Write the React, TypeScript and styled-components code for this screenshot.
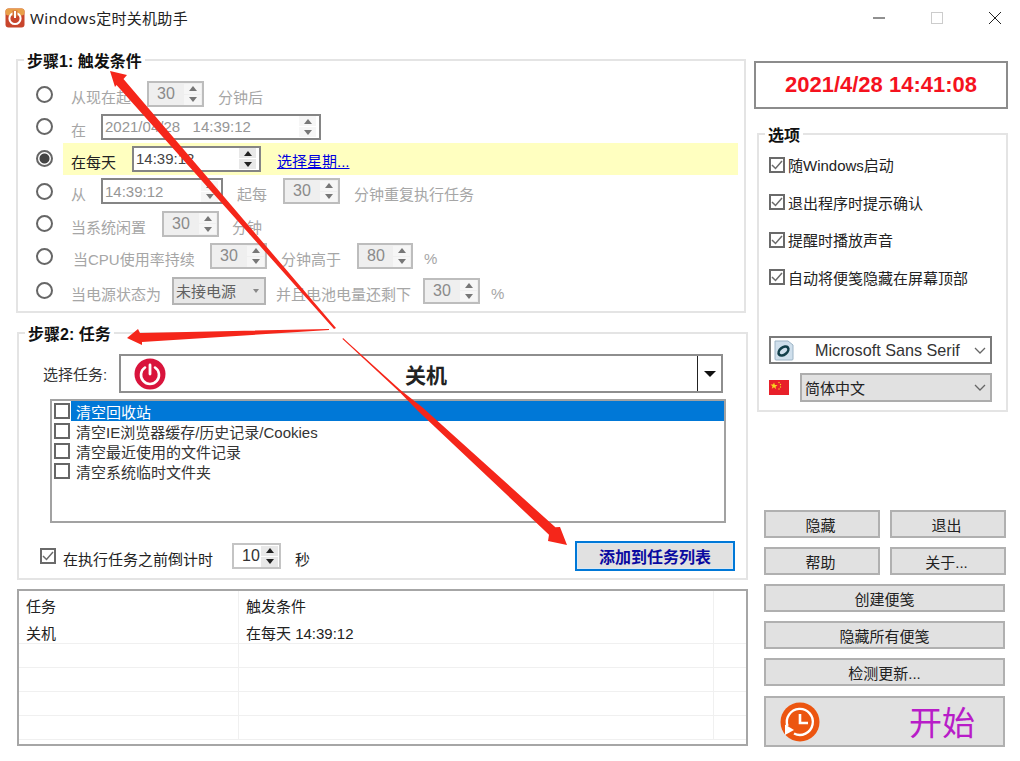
import React from "react";
import styled, { createGlobalStyle } from "styled-components";

const GlobalStyle = createGlobalStyle`
  html, body {
    margin: 0;
    padding: 0;
    background: #fff;
  }
  * {
    box-sizing: border-box;
  }
`;

const FONT = `"Liberation Sans", "Noto Sans CJK SC", sans-serif`;

const Spinner = ({ value, width, disabled }: { value: string; width: number; disabled?: boolean }) => (
  <SpinBox $w={width} $disabled={disabled}>
    <SpinValue>{value}</SpinValue>
    <SpinButtons>
      <SpinArrow $disabled={disabled} />
      <SpinArrow $down $disabled={disabled} />
    </SpinButtons>
  </SpinBox>
);

const AppIcon = () => (
  <svg width="20" height="20" viewBox="0 0 20 20">
    <rect x="0.5" y="0.5" width="19" height="19" rx="3" fill="#c8452c" />
    <rect x="0.5" y="0.5" width="19" height="7" rx="3" fill="#e8a04a" />
    <circle cx="10" cy="10.5" r="5.6" fill="none" stroke="#fff" strokeWidth="2" />
    <rect x="7.5" y="2.5" width="5" height="6" fill="#d4703a" />
    <rect x="9" y="3" width="2" height="7" fill="#fff" />
  </svg>
);

const PowerIcon = () => (
  <svg width="32" height="32" viewBox="0 0 32 32">
    <circle cx="16" cy="16" r="15.5" fill="#d9143c" />
    <path d="M11 9.5a9 9 0 1 0 10 0" fill="none" stroke="#fff" strokeWidth="2.6" strokeLinecap="round" />
    <path d="M16 7v9" stroke="#fff" strokeWidth="2.8" strokeLinecap="round" />
  </svg>
);

const FontIcon = () => (
  <svg width="20" height="22" viewBox="0 0 20 22">
    <path d="M1 2h13l5 4v14a1 1 0 0 1-1 1H2a1 1 0 0 1-1-1z" fill="#cfdfec" stroke="#9db4c6" />
    <ellipse cx="9.5" cy="12" rx="5.6" ry="3.6" fill="none" stroke="#123f4a" strokeWidth="2.6" transform="rotate(-40 9.5 12)" />
  </svg>
);

const FlagIcon = () => (
  <svg width="20" height="15" viewBox="0 0 20 15">
    <rect width="20" height="15" fill="#e8202a" />
    <path d="M5 2.5l.9 2.5 2.6.1-2 1.6.7 2.5L5 7.3 2.800 8.700l.7-2.500-2-1.600 2.600-.1z" fill="#f8d820" />
    <circle cx="10" cy="2.500" r=".7" fill="#f8d820" />
    <circle cx="11.500" cy="4.500" r=".7" fill="#f8d820" />
    <circle cx="11.500" cy="7" r=".7" fill="#f8d820" />
    <circle cx="10" cy="9" r=".7" fill="#f8d820" />
  </svg>
);

const StartIcon = () => (
  <svg width="40" height="40" viewBox="0 0 40 40">
    <circle cx="20" cy="20" r="19.500" fill="#ec5510" />
    <path d="M7.500 24A13 13 0 1 1 14 31.500" fill="none" stroke="#fff" strokeWidth="2.400" />
    <path d="M5 22.500l9 5.500-9 5z" fill="#fff" />
    <path d="M20 12v9h8" fill="none" stroke="#fff" strokeWidth="2.600" />
  </svg>
);

const Chevron = () => (
  <svg width="12" height="7" viewBox="0 0 12 7">
    <path d="M1 1l5 5 5-5" fill="none" stroke="#666" strokeWidth="1.300" />
  </svg>
);

const CheckMark = () => (
  <svg width="12" height="10" viewBox="0 0 12 10">
    <path d="M1 5l3.500 3.500L11 1" fill="none" stroke="#6a6a6a" strokeWidth="1.500" />
  </svg>
);

const Arrows = () => (
  <ArrowLayer viewBox="0 0 1020 761">
    <polygon
      points="110,71 127,75 123.500,79 336,328 334,329 116.500,85 115,87"
      fill="#f5261a"
    />
    <polygon points="127,338 138,329 140,333 329,329 329,330 142,342 142,345" fill="#f5261a" />
    <polygon
      points="567,545 560,527 555.400,527.300 422,407 400.700,390.300 343,338 342.500,339 399.300,391.700 418,411 549,534.700 548,541"
      fill="#f5261a"
    />
  </ArrowLayer>
);

const options = ["随Windows启动", "退出程序时提示确认", "提醒时播放声音", "自动将便笺隐藏在屏幕顶部"];
const cleanups = ["清空回收站", "清空IE浏览器缓存/历史记录/Cookies", "清空最近使用的文件记录", "清空系统临时文件夹"];

const App: React.FC = () => (
  <Page>
    <GlobalStyle />
    <TitleBar>
      <TitleIcon>
        <AppIcon />
      </TitleIcon>
      <TitleText>Windows定时关机助手</TitleText>
      <WindowControls>
        <svg width="12" height="12" viewBox="0 0 12 12">
          <path d="M0 6h12" stroke="#222" strokeWidth="1" />
        </svg>
        <svg width="12" height="12" viewBox="0 0 12 12">
          <rect x="0.500" y="0.500" width="11" height="11" fill="none" stroke="#ccc" />
        </svg>
        <svg width="12" height="12" viewBox="0 0 12 12">
          <path d="M0 0l12 12M12 0L0 12" stroke="#222" strokeWidth="1" />
        </svg>
      </WindowControls>
    </TitleBar>

    <Columns>
      <LeftColumn>
        <Group $w={730} $h={265} $ml={0}>
          <GroupTitle>步骤1: 触发条件</GroupTitle>
          <TriggerRows>
            <TriggerRow>
              <Radio />
              <RowBody>
                <Label $w={76} $disabled>从现在起</Label>
                <Spinner value="30" width={57} disabled />
                <Label $pl={14} $disabled>分钟后</Label>
              </RowBody>
            </TriggerRow>
            <TriggerRow>
              <Radio />
              <RowBody>
                <Label $w={30} $disabled>在</Label>
                <DateBox $w={220} $disabled>
                  <span>2021/04/28&nbsp;&nbsp;&nbsp;14:39:12</span>
                  <SpinButtons>
                    <SpinArrow $disabled />
                    <SpinArrow $down $disabled />
                  </SpinButtons>
                </DateBox>
              </RowBody>
            </TriggerRow>
            <TriggerRow>
              <Radio $checked />
              <RowBody $active>
                <Label $w={61}>在每天</Label>
                <DateBox $w={129}>
                  <span>14:39:12</span>
                  <SpinButtons>
                    <SpinArrow />
                    <SpinArrow $down />
                  </SpinButtons>
                </DateBox>
                <WeekLink href="#">选择星期...</WeekLink>
              </RowBody>
            </TriggerRow>
            <TriggerRow>
              <Radio />
              <RowBody>
                <Label $w={30} $disabled>从</Label>
                <DateBox $w={122} $disabled>
                  <span>14:39:12</span>
                  <SpinButtons>
                    <SpinArrow $disabled />
                    <SpinArrow $down $disabled />
                  </SpinButtons>
                </DateBox>
                <Label $pl={14} $w={60} $disabled>起每</Label>
                <Spinner value="30" width={57} disabled />
                <Label $pl={14} $disabled>分钟重复执行任务</Label>
              </RowBody>
            </TriggerRow>
            <TriggerRow>
              <Radio />
              <RowBody>
                <Label $w={91} $disabled>当系统闲置</Label>
                <Spinner value="30" width={57} disabled />
                <Label $pl={13} $disabled>分钟</Label>
              </RowBody>
            </TriggerRow>
            <TriggerRow>
              <Radio />
              <RowBody>
                <Label $w={139} $pl={2} $disabled>当CPU使用率持续</Label>
                <Spinner value="30" width={57} disabled />
                <Label $pl={14} $w={90} $disabled>分钟高于</Label>
                <Spinner value="80" width={56} disabled />
                <Label $pl={11} $disabled>%</Label>
              </RowBody>
            </TriggerRow>
            <TriggerRow $last>
              <Radio />
              <RowBody>
                <Label $w={101} $disabled>当电源状态为</Label>
                <PowerCombo>
                  未接电源
                  <ComboCaret />
                </PowerCombo>
                <Label $pl={10} $w={157} $disabled>并且电池电量还剩下</Label>
                <Spinner value="30" width={57} disabled />
                <Label $pl={11} $disabled>%</Label>
              </RowBody>
            </TriggerRow>
          </TriggerRows>
        </Group>

        <Group $w={731} $h={259} $ml={1} $gapTop={8}>
          <GroupTitle>步骤2: 任务</GroupTitle>
          <TaskRow>
            <TaskLabel>选择任务:</TaskLabel>
            <TaskCombo>
              <TaskIcon>
                <PowerIcon />
              </TaskIcon>
              <TaskName>关机</TaskName>
              <TaskDrop />
            </TaskCombo>
          </TaskRow>
          <CleanupList>
            {cleanups.map((text, i) => (
              <CleanupItem key={text}>
                <PlainBox />
                <CleanupText $selected={i === 0}>{text}</CleanupText>
              </CleanupItem>
            ))}
          </CleanupList>
          <CountdownRow>
            <CheckBox>
              <CheckMark />
            </CheckBox>
            <Label $pl={7} $w={176}>在执行任务之前倒计时</Label>
            <Spinner value="10" width={49} />
            <Label $pl={14}>秒</Label>
            <AddButton>添加到任务列表</AddButton>
          </CountdownRow>
        </Group>

        <TaskTable>
          <TableRow $head>
            <TableCell>任务</TableCell>
            <TableCell>触发条件</TableCell>
            <TableCell />
          </TableRow>
          <TableRow $first>
            <TableCell>关机</TableCell>
            <TableCell>在每天 14:39:12</TableCell>
            <TableCell />
          </TableRow>
          {[0, 1, 2, 3].map((n) => (
            <TableRow key={n}>
              <TableCell />
              <TableCell />
              <TableCell />
            </TableRow>
          ))}
        </TaskTable>
      </LeftColumn>

      <RightColumn>
        <Clock>2021/4/28 14:41:08</Clock>
        <OptionsGroup>
          <GroupTitle>选项</GroupTitle>
          <OptionList>
            {options.map((text) => (
              <OptionItem key={text}>
                <CheckBox>
                  <CheckMark />
                </CheckBox>
                <OptionText>{text}</OptionText>
              </OptionItem>
            ))}
          </OptionList>
          <FontCombo>
            <FontIcon />
            <FontName>Microsoft Sans Serif</FontName>
            <Chevron />
          </FontCombo>
          <LanguageRow>
            <FlagIcon />
            <LanguageCombo>
              简体中文
              <Chevron />
            </LanguageCombo>
          </LanguageRow>
        </OptionsGroup>

        <ButtonGrid>
          <ActionButton>隐藏</ActionButton>
          <ActionButton>退出</ActionButton>
          <ActionButton>帮助</ActionButton>
          <ActionButton>关于...</ActionButton>
          <ActionButton $wide>创建便笺</ActionButton>
          <ActionButton $wide>隐藏所有便笺</ActionButton>
          <ActionButton $wide>检测更新...</ActionButton>
          <StartButton>
            <StartIcon />
            <StartText>开始</StartText>
          </StartButton>
        </ButtonGrid>
      </RightColumn>
    </Columns>
    <Arrows />
  </Page>
);

export default App;

const Page = styled.div`
  position: relative;
  width: 1020px;
  height: 761px;
  overflow: hidden;
  background: #fff;
  font-family: ${FONT};
  font-size: 15px;
  color: #222;
`;

const TitleBar = styled.div`
  display: flex;
  align-items: center;
  height: 38px;
  padding: 0 19px 2px 5px;
`;

const TitleIcon = styled.div`
  display: flex;
  margin-right: 5px;
`;

const TitleText = styled.div`
  padding-bottom: 2px;
  font-family: "Noto Sans", "Noto Sans CJK SC", sans-serif;
  font-size: 15px;
  letter-spacing: 0.3px;
  color: #222;
`;

const WindowControls = styled.div`
  display: flex;
  gap: 46px;
  margin-left: auto;
`;

const Columns = styled.div`
  display: flex;
`;

const LeftColumn = styled.div`
  width: 754px;
  padding: 10px 0 0 16px;
`;

const RightColumn = styled.div`
  flex: 1;
  padding-top: 23px;
`;

const Group = styled.fieldset<{ $w: number; $h: number; $ml: number; $gapTop?: number }>`
  display: block;
  width: ${({ $w }) => $w}px;
  height: ${({ $h }) => $h}px;
  margin: ${({ $gapTop }) => $gapTop || 0}px 0 0 ${({ $ml }) => $ml}px;
  padding: 0;
  border: 2px solid #e4e4e4;
  min-width: 0;
`;

const GroupTitle = styled.legend`
  margin-left: 6px;
  padding: 4px 3px 0;
  font-size: 16px;
  line-height: 20px;
  font-weight: 700;
  color: #111;
`;

const TriggerRows = styled.div`
  display: grid;
  grid-auto-rows: 32.4px;
  padding-top: 6px;
`;

const TriggerRow = styled.div<{ $last?: boolean }>`
  display: flex;
  align-items: center;
  padding: ${({ $last }) => ($last ? "4px" : "0")} 0 0 18px;
`;

const Radio = styled.span<{ $checked?: boolean }>`
  flex: none;
  width: 17px;
  height: 17px;
  border: 2px solid #666;
  border-radius: 50%;
  margin-right: 10px;
  background: ${({ $checked }) => ($checked ? "radial-gradient(circle, #444 0 4.500px, #fff 5.500px)" : "#fff")};
`;

const RowBody = styled.div<{ $active?: boolean }>`
  display: flex;
  align-items: center;
  flex: 1;
  height: 100%;
  margin-right: 6px;
  padding-left: 8px;
  background: ${({ $active }) => ($active ? "#ffffc0" : "transparent")};
`;

const Label = styled.span<{ $w?: number; $pl?: number; $disabled?: boolean }>`
  flex: none;
  white-space: nowrap;
  width: ${({ $w }) => ($w ? `${$w}px` : "auto")};
  padding: 5px 0 0 ${({ $pl }) => $pl || 0}px;
  color: ${({ $disabled }) => ($disabled ? "#a6a6a6" : "#222")};
`;

const SpinBox = styled.div<{ $w: number; $disabled?: boolean }>`
  flex: none;
  display: flex;
  align-items: center;
  justify-content: space-between;
  width: ${({ $w }) => $w}px;
  height: 26px;
  padding: 0 1px 0 8px;
  border: 2px solid ${({ $disabled }) => ($disabled ? "#bdbdbd" : "#c4c4c4")};
  background: ${({ $disabled }) => ($disabled ? "#efefef" : "#fff")};
  color: ${({ $disabled }) => ($disabled ? "#8a8a8a" : "#333")};
  font-size: 16px;
`;

const SpinValue = styled.span`
  line-height: 1;
`;

const SpinButtons = styled.div`
  flex: none;
  display: flex;
  flex-direction: column;
  gap: 1px;
  width: 17px;
`;

const SpinArrow = styled.div<{ $down?: boolean; $disabled?: boolean }>`
  display: flex;
  align-items: center;
  justify-content: center;
  height: 10px;
  background: ${({ $disabled }) => ($disabled ? "#f6f6f6" : "#e8e8e8")};

  &::before {
    content: "";
    border-left: 4px solid transparent;
    border-right: 4px solid transparent;
    ${({ $down, $disabled }) =>
      `${$down ? "border-top" : "border-bottom"}: 5px solid ${$disabled ? "#777" : "#222"};`}
  }
`;

const DateBox = styled.div<{ $w: number; $disabled?: boolean }>`
  flex: none;
  display: flex;
  align-items: center;
  justify-content: space-between;
  width: ${({ $w }) => $w}px;
  height: 26px;
  padding: 0 3px 0 2px;
  border: 2px solid #858585;
  background: #fff;
  font-size: 15px;
  color: ${({ $disabled }) => ($disabled ? "#969696" : "#444")};
`;

const WeekLink = styled.a`
  margin: 3px 0 0 16px;
  color: #0000e0;
  text-decoration: underline;
  font-size: 15px;
`;

const PowerCombo = styled.div`
  flex: none;
  display: flex;
  align-items: center;
  justify-content: space-between;
  width: 94px;
  height: 28px;
  padding: 0 5px 0 2px;
  border: 2px solid #b4b4b4;
  background: #e8e8e8;
  color: #606060;
`;

const ComboCaret = styled.span`
  border-left: 3px solid transparent;
  border-right: 3px solid transparent;
  border-top: 4px solid #888;
`;

const TaskRow = styled.div`
  display: flex;
  align-items: center;
  padding: 9px 0 0 24px;
`;

const TaskLabel = styled.span`
  width: 76px;
  flex: none;
  color: #333;
`;

const TaskCombo = styled.div`
  display: flex;
  align-items: center;
  width: 604px;
  height: 39px;
  border: 2px solid #8e8e8e;
  background: #fff;
`;

const TaskIcon = styled.div`
  display: flex;
  margin-left: 13px;
`;

const TaskName = styled.div`
  flex: 1;
  text-align: center;
  padding-right: 11px;
  font-size: 21px;
  font-weight: 700;
  color: #222;
`;

const TaskDrop = styled.div`
  flex: none;
  display: flex;
  align-items: center;
  justify-content: center;
  width: 24px;
  height: 100%;
  border-left: 1px solid #222;

  &::before {
    content: "";
    border-left: 6px solid transparent;
    border-right: 6px solid transparent;
    border-top: 6px solid #111;
  }
`;

const CleanupList = styled.div`
  width: 676px;
  height: 124px;
  margin: 6px 0 0 31px;
  padding: 0;
  border: 2px solid #a2a2a2;
  background: #fff;
`;

const CleanupItem = styled.div`
  display: flex;
  align-items: center;
  height: 20px;
  padding-left: 2px;
`;

const PlainBox = styled.span`
  flex: none;
  width: 16px;
  height: 16px;
  border: 2px solid #666;
  background: #fff;
`;

const CleanupText = styled.span<{ $selected?: boolean }>`
  flex: 1;
  height: 20px;
  margin: 0 0 0 1px;
  padding: 0 0 0 5px;
  line-height: 24px;
  font-size: 15px;
  white-space: nowrap;
  overflow: hidden;
  background: ${({ $selected }) => ($selected ? "#0078d7" : "transparent")};
  color: ${({ $selected }) => ($selected ? "#fff" : "#333")};
`;

const CountdownRow = styled.div`
  display: flex;
  align-items: center;
  height: 30px;
  margin-top: 18px;
  padding-left: 21px;
`;

const CheckBox = styled.span`
  flex: none;
  display: flex;
  align-items: center;
  justify-content: center;
  width: 16px;
  height: 16px;
  border: 2px solid #6a6a6a;
  background: #fff;
`;

const AddButton = styled.button`
  flex: none;
  width: 160px;
  height: 30px;
  margin-left: auto;
  margin-right: 11px;
  padding: 0 0 0 0;
  border: 2px solid #0078d7;
  outline: 1px solid #d8e8f6;
  outline-offset: -3px;
  background: #e1e1e1;
  font-family: ${FONT};
  font-size: 16px;
  font-weight: 700;
  color: #0a0aa0;
`;

const TaskTable = styled.div`
  width: 731px;
  height: 157px;
  margin: 9px 0 0 1px;
  border: 2px solid #a6a6a6;
  background: #fff;
`;

const TableRow = styled.div<{ $head?: boolean; $first?: boolean }>`
  display: grid;
  grid-template-columns: 220px 475px 1fr;
  height: ${({ $head, $first }) => ($head ? "30px" : $first ? "23px" : "24px")};
  border-bottom: ${({ $head }) => ($head ? "0" : "1px solid #f0f0f0")};
  line-height: ${({ $head }) => ($head ? "32px" : "26px")};
`;

const TableCell = styled.div`
  padding-left: 7px;
  border-right: 1px solid #f0f0f0;
  white-space: nowrap;
  color: #222;
  font-size: 15px;

  &:last-child {
    border-right: 0;
  }
`;

const Clock = styled.div`
  width: 254px;
  height: 48px;
  border: 2px solid #8c8c8c;
  line-height: 44px;
  text-align: center;
  font-size: 22px;
  font-weight: 700;
  color: #f5121e;
`;

const OptionsGroup = styled.fieldset`
  width: 251px;
  height: 290px;
  margin: 13px 0 0 3px;
  padding: 0;
  border: 2px solid #e4e4e4;
  min-width: 0;
`;

const OptionList = styled.div`
  display: grid;
  grid-auto-rows: 37.500px;
  padding: 0 0 0 10px;
`;

const OptionItem = styled.div`
  display: flex;
  align-items: center;
`;

const OptionText = styled.span`
  margin-left: 3px;
  white-space: nowrap;
  color: #222;
`;

const FontCombo = styled.div`
  display: flex;
  align-items: center;
  width: 223px;
  height: 28px;
  margin: 40px 0 0 10px;
  padding: 0 4px 0 3px;
  border: 2px solid #7a7a7a;
  background: #fff;
`;

const FontName = styled.span`
  flex: 1;
  padding-left: 21px;
  font-size: 16.200px;
  color: #333;
`;

const LanguageRow = styled.div`
  display: flex;
  align-items: center;
  gap: 11px;
  margin: 9px 0 0 10px;
`;

const LanguageCombo = styled.div`
  display: flex;
  align-items: center;
  justify-content: space-between;
  width: 192px;
  height: 29px;
  padding: 0 4px 0 3px;
  border: 2px solid #adadad;
  background: #e1e1e1;
  color: #222;
`;

const ButtonGrid = styled.div`
  display: grid;
  grid-template-columns: 116px 116px;
  column-gap: 10px;
  row-gap: 9px;
  margin: 98px 0 0 10px;
`;

const ActionButton = styled.button<{ $wide?: boolean }>`
  grid-column: ${({ $wide }) => ($wide ? "1 / -1" : "auto")};
  width: ${({ $wide }) => ($wide ? "241px" : "116px")};
  height: 28px;
  padding: 0 ${({ $wide }) => ($wide ? "0" : "3px")} 0 0;
  border: 2px solid #b0b0b0;
  background: #e1e1e1;
  font-family: ${FONT};
  font-size: 15px;
  color: #222;
`;

const StartButton = styled.button`
  grid-column: 1 / -1;
  display: flex;
  align-items: center;
  width: 241px;
  height: 51px;
  margin-top: 1px;
  padding: 0 0 0 14px;
  border: 2px solid #b0b0b0;
  background: #e1e1e1;
`;

const StartText = styled.span`
  margin-left: 89px;
  font-family: "Noto Sans CJK SC", sans-serif;
  font-size: 33px;
  font-weight: 400;
  line-height: 1;
  color: #b81cc8;
`;

const ArrowLayer = styled.svg`
  position: absolute;
  top: 0;
  left: 0;
  width: 1020px;
  height: 761px;
  pointer-events: none;
`;
